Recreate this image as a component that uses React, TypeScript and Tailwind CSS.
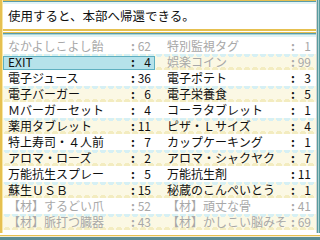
import React from "react";

type Item = { name: string; count: number; grey?: boolean; sel?: boolean };

const left: Item[] = [
  { name: "なかよしこよし飴", count: 62, grey: true },
  { name: "EXIT", count: 4, sel: true },
  { name: "電子ジュース", count: 36 },
  { name: "電子バーガー", count: 6 },
  { name: "Ｍバーガーセット", count: 4 },
  { name: "薬用タブレット", count: 11 },
  { name: "特上寿司・４人前", count: 7 },
  { name: "アロマ・ローズ", count: 2 },
  { name: "万能抗生スプレー", count: 5 },
  { name: "蘇生ＵＳＢ", count: 15 },
  { name: "【材】するどい爪", count: 52, grey: true },
  { name: "【材】脈打つ臓器", count: 43, grey: true },
];

const right: Item[] = [
  { name: "特別監視タグ", count: 1, grey: true },
  { name: "娯楽コイン", count: 99, grey: true },
  { name: "電子ポテト", count: 3 },
  { name: "電子栄養食", count: 5 },
  { name: "コーラタブレット", count: 1 },
  { name: "ピザ・Ｌサイズ", count: 4 },
  { name: "カップケーキング", count: 1 },
  { name: "アロマ・シャクヤク", count: 7 },
  { name: "万能抗生剤", count: 11 },
  { name: "秘蔵のこんぺいとう", count: 1 },
  { name: "【材】頑丈な骨", count: 41, grey: true },
  { name: "【材】かしこい脳みそ", count: 69, grey: true },
];

function Cell({ item, side }: { item: Item; side: "l" | "r" }) {
  const color = item.grey ? "text-[#a8a8a8]" : "text-[#101010]";
  return (
    <div
      className={
        "relative flex items-center h-full " +
        (side === "l" ? "w-[157px] pl-[5px] pr-[9px]" : "w-[156px] pl-[7px] pr-[5px]") +
        " " +
        color
      }
    >
      {item.sel && (
        <div className="absolute left-0 right-[5px] top-[2px] bottom-0 bg-[#b6e2ea] border border-[#5fb0c0]" />
      )}
      <span className="relative flex-1 whitespace-nowrap overflow-hidden">{item.name}</span>
      <span className="relative w-[6px] text-center font-bold">:</span>
      <span className="relative w-[15px] text-right">{item.count}</span>
    </div>
  );
}

export default function App() {
  return (
    <div className="w-[320px] h-[240px] bg-white flex flex-col overflow-hidden font-['Noto_Sans_CJK_JP',sans-serif] text-[12px] leading-[16px]">
      <div className="flex h-[233px]">
        <div className="w-[2px] bg-[#e6c050]" />
        <div className="w-[1px] bg-[#f6e6a6]" />
        <div className="flex-1 flex flex-col">
          <div className="h-[1px] bg-[#e6c050]" />
          <div className="h-[1px] bg-[#5a9ca8]" />
          <div className="h-[2px] bg-[#e2f3f6]" />
          <div className="h-[24px] flex items-center pl-[5px] text-[#101010] text-[12.5px]">
            使用すると、本部へ帰還できる。
          </div>
          <div className="h-[1px] bg-white" />
          <div className="h-[2px] bg-[#e6c050]" />
          <div className="h-[1px] bg-white" />
          <div className="h-[1px] bg-[#e6c050]" />
          <div className="h-[1px] bg-[#5a9ca8]" />
          <div className="h-[1px] bg-[#a8d4dc]" />
          <div className="h-[2px] bg-[#e2f3f6]" />
          <div className="h-[1px] bg-white" />
          <div className="flex flex-col">
            {left.map((l, i) => (
              <div
                key={i}
                className={
                  "flex h-[16px] " +
                  (i % 2 === 1
                    ? "bg-[#fbf8e4] bg-[radial-gradient(circle_at_50%_0,#d6f0f4_3px,transparent_3.5px),radial-gradient(circle_at_50%_100%,#f3ecc0_3px,transparent_3.5px)] bg-[length:8px_16px]"
                    : "")
                }
              >
                <Cell item={l} side="l" />
                <Cell item={right[i]} side="r" />
              </div>
            ))}
          </div>
        </div>
        <div className="w-[1px] bg-[#d4d4d4]" />
        <div className="w-[1px] bg-[#5a9ca0]" />
        <div className="w-[1px] bg-[#a8d0d0]" />
        <div className="w-[1px] bg-[#5a9ca0]" />
      </div>
      <div className="h-[2px] bg-white" />
      <div className="h-[1px] bg-[#e6c050]" />
      <div className="h-[1px] bg-[#f6eccc]" />
      <div className="h-[3px] bg-[#5a8c94]" />
    </div>
  );
}
